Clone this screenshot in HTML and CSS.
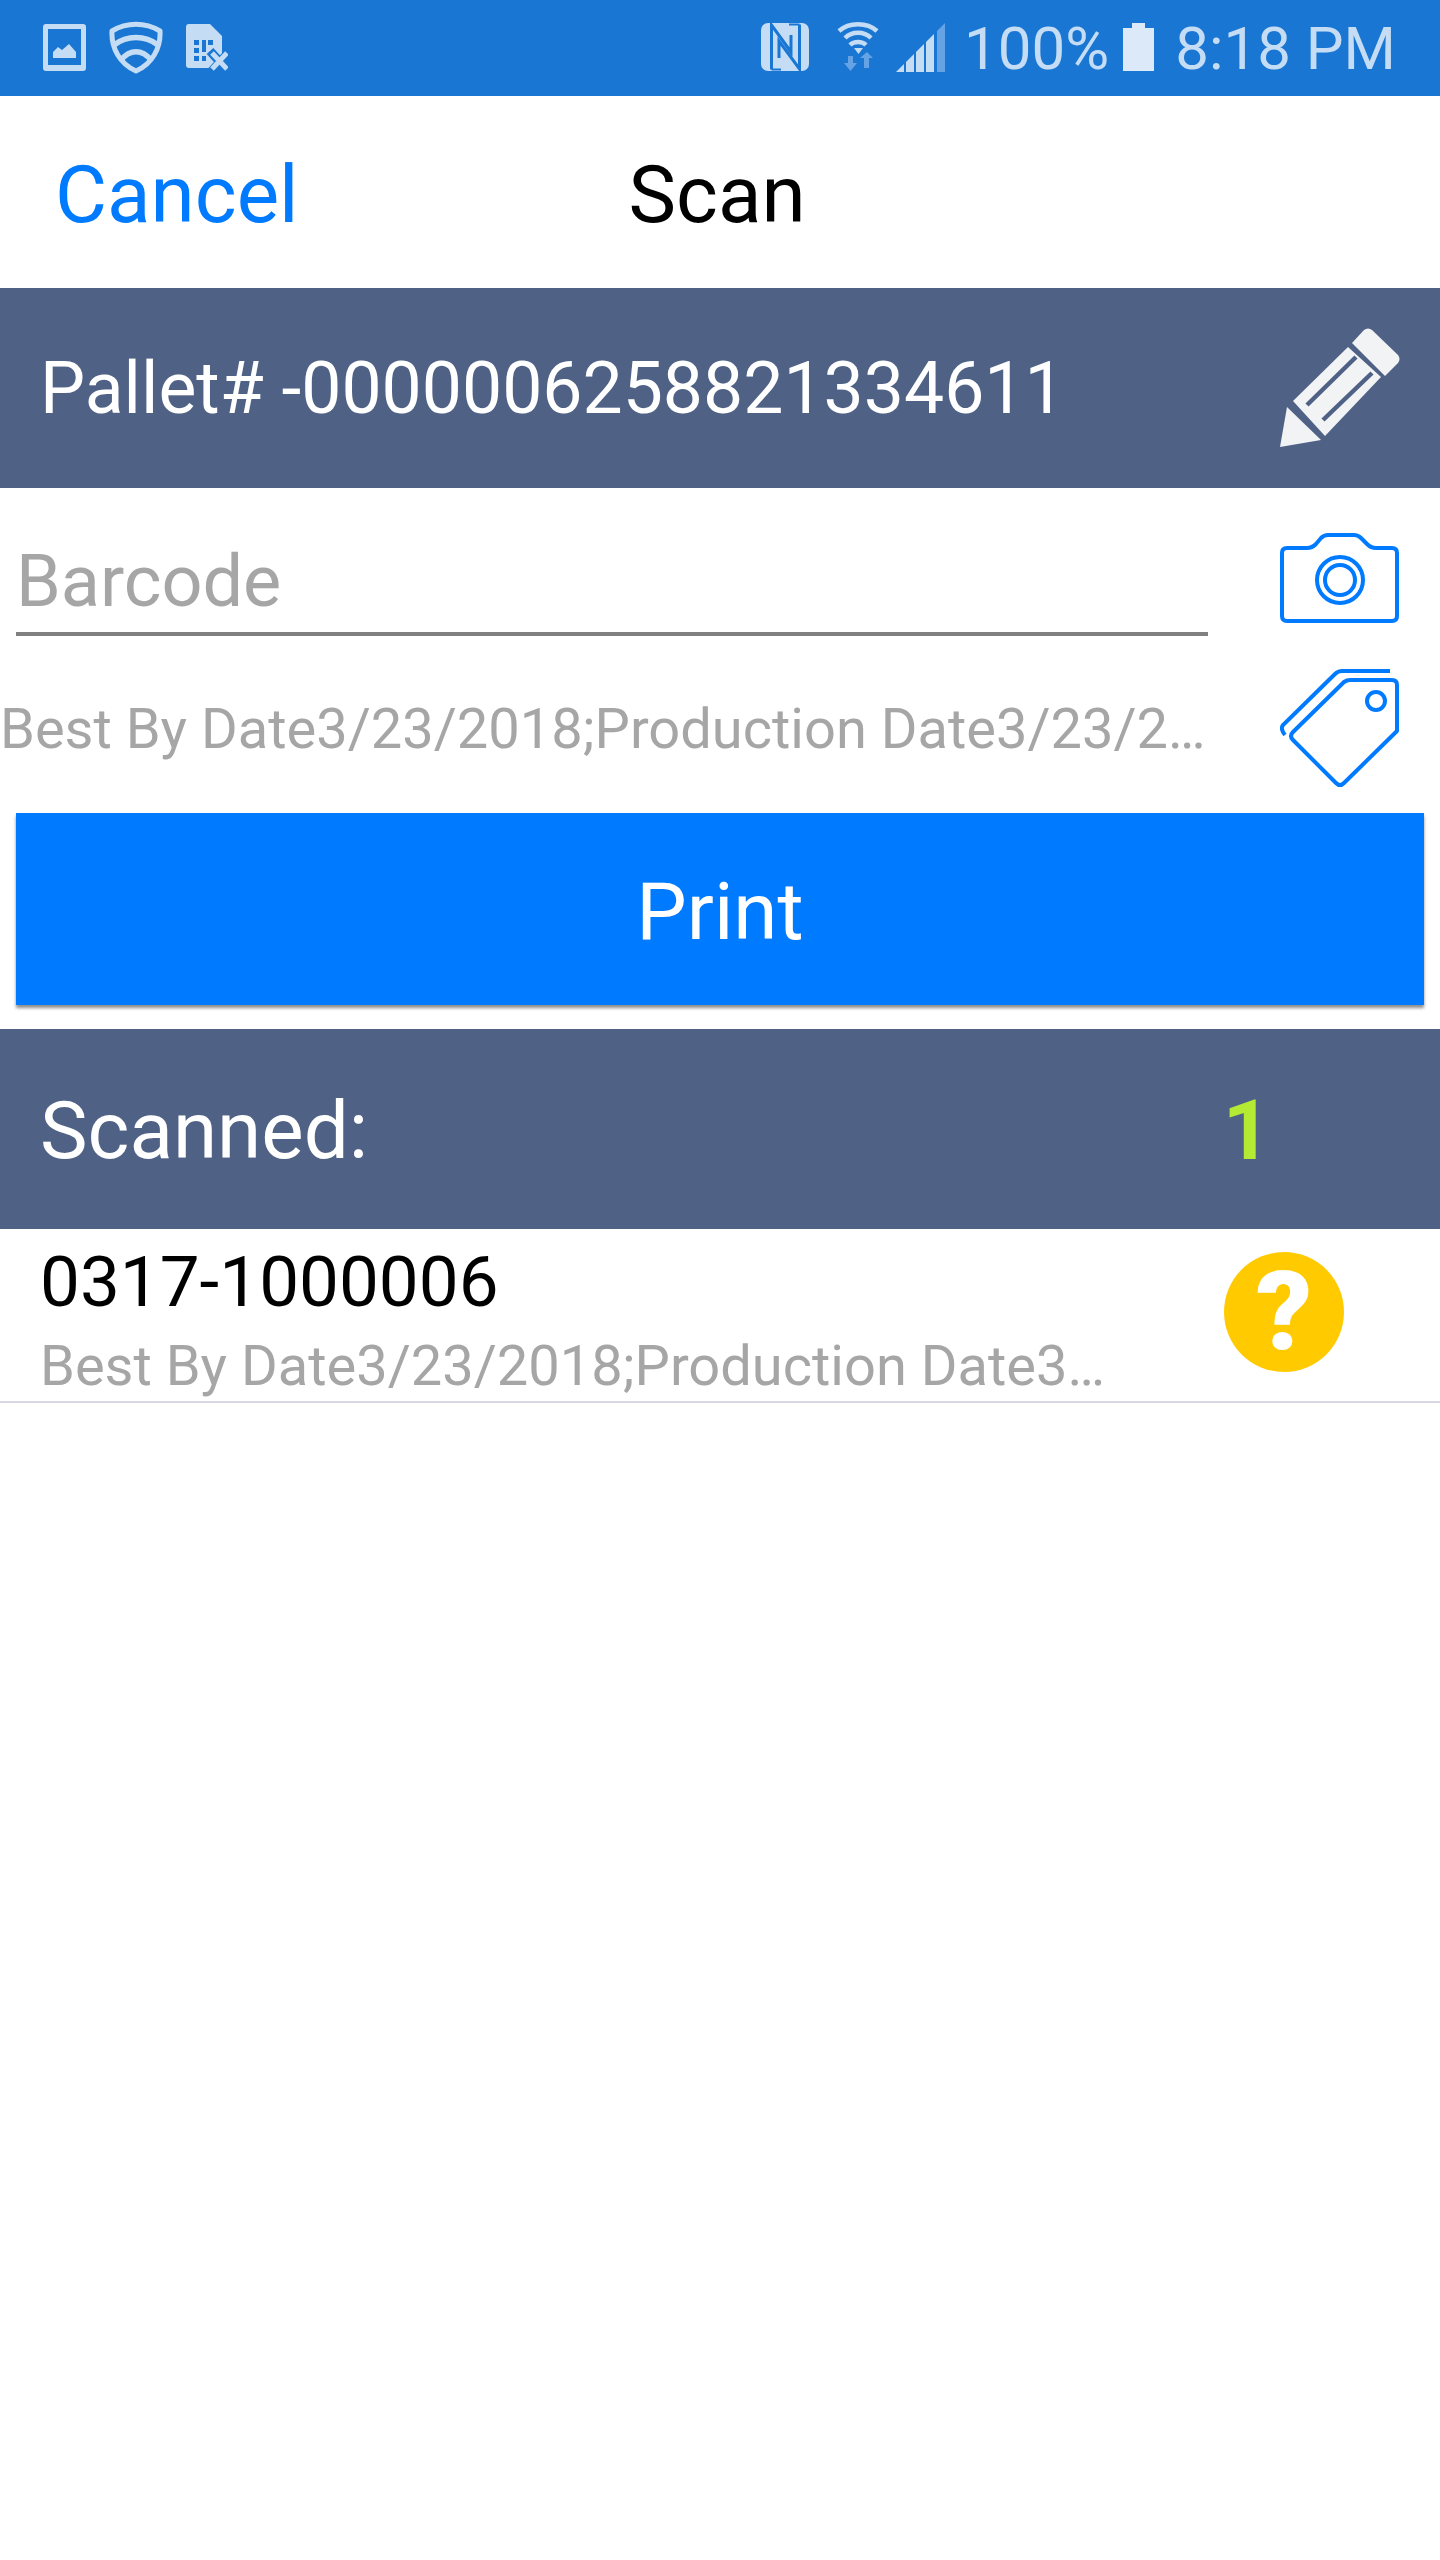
FILE: index.html
```html
<!DOCTYPE html>
<html lang="en">

<head>
    <meta charset="UTF-8">
    <meta name="viewport" content="width=device-width, initial-scale=1.0">
    <title>Scan</title>
    <link rel="stylesheet" href="styles.css">
</head>

<body>
    <div class="container">
        <div class="status">
            <div class="status__group">
                <svg class="status__image" viewBox="0 0 43 47">
                    <path fill-rule="evenodd" d="M3 0H40Q43 0 43 3V44Q43 47 40 47H3Q0 47 0 44V3Q0 0 3 0ZM5 5V41H38V5Z" fill="#c5dcf5" />
                    <path d="M10 34V28L15 23L19 26L26 20L33 28V34Z" fill="#c5dcf5" />
                </svg>
                <svg class="status__shield" viewBox="0 0 54 53">
                    <path d="M3 10C18 1 36 1 51 10C52 27 43 43 27 50C11 43 2 27 3 10Z" fill="none" stroke="#c5dcf5" stroke-width="5" stroke-linejoin="round" />
                    <path d="M5 24C18 14 36 14 49 24" fill="none" stroke="#c5dcf5" stroke-width="5.5" />
                    <path d="M12 39C21 28 33 28 42 39" fill="none" stroke="#c5dcf5" stroke-width="5.5" />
                </svg>
                <svg class="status__sim" viewBox="0 0 42 47">
                    <path d="M3 0H24L36 12V44H3Q0 44 0 41V3Q0 0 3 0Z" fill="#c5dcf5" />
                    <path d="M8 16H13V21H8ZM16 16H20V28H16ZM22 16H27V21H22ZM8 24H13V29H8ZM8 32H13V37H8ZM16 32H20V37H16Z" fill="#1976d2" />
                    <path d="M24 27L44 49M44 27L24 49" stroke="#1976d2" stroke-width="9" />
                    <path d="M26 29L41 45M41 29L26 45" stroke="#c5dcf5" stroke-width="5" />
                </svg>
            </div>
            <div class="status__group status__group--right">
                <svg class="status__nfc" viewBox="0 0 48 48">
                    <rect width="48" height="48" rx="7" fill="#c5dcf5" />
                    <path d="M10.5 46.5V2L30 29V12M38.5 1.500V46L18 18V35" fill="none" stroke="#1976d2" stroke-width="3" />
                    <path d="M28 1.500H38.500M10.500 46.500H20" fill="none" stroke="#1976d2" stroke-width="2" />
                </svg>
                <svg class="status__wifi" viewBox="0 0 42 50">
                    <path d="M2 9C12 0 30 0 40 9" fill="none" stroke="#c5dcf5" stroke-width="4.500" />
                    <path d="M8 16C15 9 27 9 34 16" fill="none" stroke="#c5dcf5" stroke-width="4.500" />
                    <path d="M13 23C17 19 25 19 29 23" fill="none" stroke="#c5dcf5" stroke-width="4.500" />
                    <path d="M17 26H26L21.500 32Z" fill="#c5dcf5" />
                    <path d="M11 34H16V41H20L13.500 49L7 41H11Z" fill="#65a3e4" />
                    <path d="M27 46V36H23L30 30L36 36H32V46Z" fill="#65a3e4" />
                </svg>
                <svg class="status__signal" viewBox="0 0 49 49">
                    <path d="M0 49L8 41V49ZM10 39L18 31V49H10ZM20 29L28 21V49H20ZM30 19L38 11V49H30Z" fill="#c5dcf5" />
                    <path d="M41 8L49 0V49H41Z" fill="#65a3e4" />
                </svg>
                <span class="status__text status__percent">100%</span>
                <svg class="status__battery" viewBox="0 0 31 48">
                    <path d="M9 0H22V5H31V48H0V5H9Z" fill="#dce9f9" />
                </svg>
                <span class="status__text status__time">8:18 PM</span>
            </div>
        </div>

        <header class="nav">
            <a class="nav__cancel">Cancel</a>
            <span class="nav__title">Scan</span>
        </header>

        <div class="bar">
            <span class="bar__label">Pallet# -0000006258821334611</span>
            <svg class="bar__pencil" viewBox="0 0 120 120">
                <path d="M84 2Q88 -1 92 2L118 27Q121 31 118 35L105 48L72 15Z" fill="#f2f3f5" />
                <path d="M13 73L68 19L101 49L45 108Z" fill="#f2f3f5" />
                <path d="M27 77L76 29M43 92L92 45" stroke="#4f6286" stroke-width="4.5" />
                <path d="M7 79L41 112L0 119Z" fill="#f2f3f5" />
            </svg>
        </div>

        <div class="field">
            <div class="field__input">Barcode</div>
            <svg class="field__icon field__icon--camera" viewBox="0 0 119 90">
                <path d="M7 15H27Q32 15 36 11L41 5Q44 2 48 2H74Q78 2 81 5L87 11Q91 15 96 15H112Q117 15 117 20V83Q117 88 112 88H7Q2 88 2 83V20Q2 15 7 15Z" fill="none" stroke="#007aff" stroke-width="4" />
                <circle cx="60" cy="47" r="23" fill="none" stroke="#007aff" stroke-width="4" />
                <circle cx="60" cy="47" r="15" fill="none" stroke="#007aff" stroke-width="4" />
            </svg>
        </div>

        <div class="field field--info">
            <div class="field__info">Best By Date3/23/2018;Production Date3/23/2018;Lot 0317</div>
            <svg class="field__icon" viewBox="0 0 119 119">
                <path d="M70 11H112Q117 11 117 16V62L64 114Q60 118 56 114L13 71Q9 67 13 63L64 13Q67 11 70 11Z" fill="none" stroke="#007aff" stroke-width="4" stroke-linejoin="round" />
                <path d="M110 2H62Q58 2 55 5L3 56Q0 60 5 66" fill="none" stroke="#007aff" stroke-width="4" />
                <circle cx="96" cy="32" r="9" fill="none" stroke="#007aff" stroke-width="4" />
            </svg>
        </div>

        <button class="print">Print</button>

        <div class="bar bar--scanned">
            <span class="bar__label bar__label--big">Scanned:</span>
            <span class="bar__count">1</span>
        </div>

        <div class="item">
            <div class="item__text">
                <div class="item__name">0317-1000006</div>
                <div class="item__info">Best By Date3/23/2018;Production Date3/23/2018;Lot 0317</div>
            </div>
            <div class="item__badge">?</div>
        </div>
    </div>
</body>

</html>
```

FILE: styles.css
```css
* {
    box-sizing: border-box;
}

body {
    margin: 0;
    background-color: #fff;
    font-family: 'Roboto', sans-serif;
}

.container {
    display: flex;
    flex-direction: column;
    width: 1440px;
    height: 2560px;
    overflow: hidden;
}

.status {
    display: flex;
    align-items: center;
    justify-content: space-between;
    flex-shrink: 0;
    height: 96px;
    padding: 0 44px 2px 43px;
    background-color: #1976d2;
}

.status__group {
    display: flex;
    align-items: center;
}

.status__image {
    width: 43px;
    height: 47px;
}

.status__shield {
    width: 54px;
    height: 53px;
    margin-left: 23px;
}

.status__sim {
    width: 42px;
    height: 47px;
    margin-left: 23px;
}

.status__nfc {
    width: 48px;
    height: 48px;
}

.status__wifi {
    width: 42px;
    height: 50px;
    margin-left: 28px;
}

.status__signal {
    width: 49px;
    height: 49px;
    margin-left: 17px;
}

.status__battery {
    width: 31px;
    height: 48px;
    margin-left: 14px;
}

.status__text {
    margin-top: 4px;
    color: #c5dcf5;
    font-size: 60px;
    line-height: 60px;
}

.status__percent {
    margin-left: 19px;
}

.status__time {
    margin-left: 21px;
}

.nav {
    display: flex;
    align-items: center;
    flex-shrink: 0;
    height: 192px;
    padding: 6px 0 0 55px;
    font-size: 80px;
}

.nav__cancel {
    color: #007aff;
}

.nav__title {
    margin-left: 330px;
    color: #000;
}

.bar {
    display: flex;
    align-items: center;
    justify-content: space-between;
    flex-shrink: 0;
    height: 200px;
    padding: 0 40px;
    background-color: #4f6286;
    color: #fff;
}

.bar__label {
    font-size: 71.5px;
}

.bar__label--big {
    font-size: 80px;
}

.bar__pencil {
    width: 120px;
    height: 120px;
}

.bar__count {
    margin-right: 129px;
    color: #b5ea34;
    font-size: 84px;
    font-weight: 700;
}

.bar--scanned {
    margin-top: 24px;
    padding-top: 3px;
}

.field {
    display: flex;
    align-items: flex-end;
    justify-content: space-between;
    flex-shrink: 0;
    height: 148px;
    padding: 0 41px 0 16px;
}

.field--info {
    align-items: center;
    height: 177px;
    padding: 8px 41px 0 0;
}

.field__input {
    width: 1192px;
    height: 96px;
    border-bottom: 4px solid #808080;
    color: #a6a6a6;
    font-size: 72px;
    line-height: 84px;
}

.field__info {
    width: 1208px;
    overflow: hidden;
    color: #a6a6a6;
    font-size: 56px;
    white-space: nowrap;
    text-overflow: ellipsis;
}

.field__icon {
    display: block;
    width: 119px;
    height: 119px;
}

.field__icon--camera {
    height: 90px;
    margin-bottom: 13px;
}

.print {
    flex-shrink: 0;
    height: 192px;
    margin: 0 16px;
    padding: 6px 0 0;
    border: none;
    background-color: #007aff;
    box-shadow: 0 3px 3px rgba(0, 0, 0, .45);
    color: #fff;
    font-family: 'Roboto', sans-serif;
    font-size: 80px;
}

.item {
    display: flex;
    align-items: center;
    justify-content: space-between;
    flex-shrink: 0;
    height: 174px;
    padding: 0 96px 6px 40px;
    border-bottom: 2px solid #d8d8e4;
}

.item__text {
    width: 1073px;
    padding-top: 14px;
}

.item__name {
    color: #000;
    font-size: 71px;
    line-height: 84px;
}

.item__info {
    margin-top: 9px;
    overflow: hidden;
    color: #a6a6a6;
    font-size: 56px;
    line-height: 66px;
    white-space: nowrap;
    text-overflow: ellipsis;
}

.item__badge {
    display: flex;
    align-items: center;
    justify-content: center;
    width: 120px;
    height: 120px;
    border-radius: 50%;
    background-color: #ffcb00;
    color: #fff;
    font-size: 110px;
    font-weight: 900;
    line-height: 120px;
}
```
